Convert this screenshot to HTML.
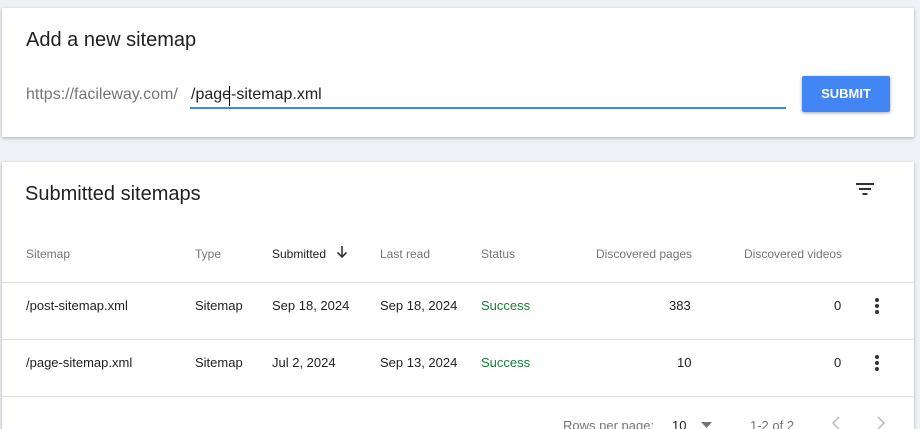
<!DOCTYPE html>
<html><head><style>
html,body{margin:0;width:920px;height:429px;overflow:hidden}
body{background:#eef1f6;font-family:"Liberation Sans",Arial,sans-serif;position:relative}
.card{position:absolute;background:#fff;box-shadow:0 1px 3px rgba(0,0,0,.3)}
.a{position:absolute;white-space:nowrap}
.h{font-size:12px;color:#757575;top:247px}
.c{font-size:13px;color:#202124}
.g{color:#188038}
.line{position:absolute;height:1px;background:#e0e0e0}
.dots{position:absolute;width:4px}
.dots i{display:block;width:4px;height:4px;border-radius:2px;background:#333;margin-bottom:2px}
</style></head><body>
<div class="card" style="left:2px;top:8px;width:912px;height:129px">
  <div class="a" style="left:24px;top:21px;font-size:20px;color:#202124">Add a new sitemap</div>
  <div class="a" style="left:24px;top:78px;font-size:16px;color:#757575">https://facileway.com/</div>
  <div class="a" style="left:189px;top:78px;font-size:16px;color:#202124">/page-sitemap.xml</div>
  <div class="a" style="left:227px;top:78px;width:1px;height:20px;background:#000"></div>
  <div class="a" style="left:188px;top:99px;width:596px;height:2px;background:#4285f4"></div>
  <div class="a" style="left:800px;top:68px;width:88px;height:36px;background:#4285f4;border-radius:2px;box-shadow:0 1px 3px rgba(0,0,0,.35);color:#fff;font-size:13px;font-weight:bold;text-align:center;line-height:36px">SUBMIT</div>
</div>
<div class="card" style="left:2px;top:162px;width:912px;height:280px">
  <div class="a" style="left:23px;top:21px;font-size:20px;color:#202124">Submitted sitemaps</div>
  <svg class="a" style="left:852px;top:20px" width="24" height="14"><rect x="2" y="1" width="18" height="2" fill="#333"/><rect x="5" y="6" width="12" height="2" fill="#333"/><rect x="8.5" y="11" width="5" height="2" fill="#333"/></svg>
</div>
<div class="a h" style="left:26px">Sitemap</div>
<div class="a h" style="left:195px">Type</div>
<div class="a h" style="left:272px;color:#202124">Submitted</div>
<svg class="a" style="left:335px;top:245px" width="14" height="14"><path d="M7 1v11M2.5 7.5L7 12l4.5-4.5" stroke="#333" stroke-width="1.6" fill="none"/></svg>
<div class="a h" style="left:380px">Last read</div>
<div class="a h" style="left:481px">Status</div>
<div class="a h" style="left:596px">Discovered pages</div>
<div class="a h" style="left:744px">Discovered videos</div>
<div class="line" style="top:282px;left:2px;width:912px"></div>
<div class="a c" style="left:26px;top:298px">/post-sitemap.xml</div>
<div class="a c" style="left:195px;top:298px">Sitemap</div>
<div class="a c" style="left:272px;top:298px">Sep 18, 2024</div>
<div class="a c" style="left:380px;top:298px">Sep 18, 2024</div>
<div class="a c g" style="left:481px;top:298px">Success</div>
<div class="a c" style="left:669px;top:298px">383</div>
<div class="a c" style="left:834px;top:298px">0</div>
<div class="dots" style="left:875px;top:298px"><i></i><i></i><i></i></div>
<div class="line" style="top:339px;left:2px;width:912px"></div>
<div class="a c" style="left:26px;top:355px">/page-sitemap.xml</div>
<div class="a c" style="left:195px;top:355px">Sitemap</div>
<div class="a c" style="left:272px;top:355px">Jul 2, 2024</div>
<div class="a c" style="left:380px;top:355px">Sep 13, 2024</div>
<div class="a c g" style="left:481px;top:355px">Success</div>
<div class="a c" style="left:677px;top:355px">10</div>
<div class="a c" style="left:834px;top:355px">0</div>
<div class="dots" style="left:875px;top:355px"><i></i><i></i><i></i></div>
<div class="line" style="top:396px;left:2px;width:912px"></div>
<div class="a" style="left:563px;top:418px;font-size:13px;color:#757575">Rows per page:</div>
<div class="a" style="left:672px;top:418px;font-size:13px;color:#202124">10</div>
<svg class="a" style="left:701px;top:422px" width="12" height="6"><path d="M0 0h11L5.5 6z" fill="#757575"/></svg>
<div class="a" style="left:750px;top:418px;font-size:13px;color:#757575">1-2 of 2</div>
<svg class="a" style="left:831px;top:416px" width="10" height="14"><path d="M8 1L2 7l6 6" stroke="#bbb" stroke-width="1.5" fill="none"/></svg>
<svg class="a" style="left:876px;top:416px" width="10" height="14"><path d="M2 1l6 6-6 6" stroke="#bbb" stroke-width="1.5" fill="none"/></svg>
</body></html>
